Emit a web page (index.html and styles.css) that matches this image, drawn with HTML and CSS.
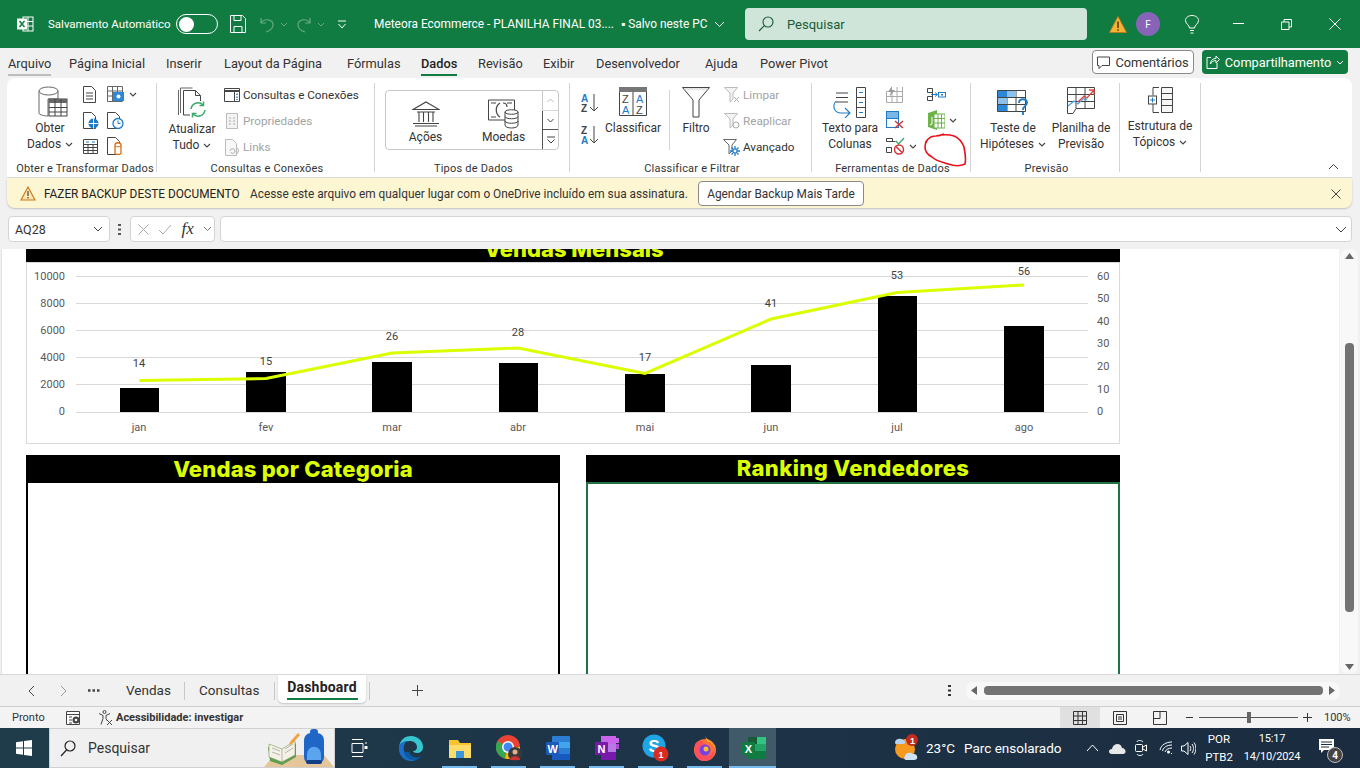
FILE: index.html
```html
<!DOCTYPE html>
<html lang="pt-BR">
<head>
<meta charset="utf-8">
<title>Meteora Ecommerce - PLANILHA FINAL</title>
<link rel="stylesheet" href="styles.css">
</head>
<body>
<svg class="sprite" aria-hidden="true"><symbol id="chev" viewBox="0 0 8 5"><path d="M1 1l3 3 3-3" fill="none" stroke="#444" stroke-width="1.1"/></symbol></svg>
<div class="app">

<header class="titlebar">
  <svg class="t-excel" width="18" height="18" viewBox="0 0 18 18"><rect x="7" y="2" width="10" height="14" fill="none" stroke="#fff"/><path d="M7 6.5h10M7 11h10M12 2v14" stroke="#fff"/><rect x="1" y="3.500" width="10" height="11" fill="#fff"/><path d="M3.500 6l5 6M8.500 6l-5 6" stroke="#107c41" stroke-width="1.500"/></svg>
  <span class="t-auto">Salvamento Automático</span>
  <span class="toggle"><span class="knob"></span></span>
  <svg class="t-save" width="16" height="18" viewBox="0 0 16 18"><path d="M.5.500h12l3 3v14H.5zM4 .5v5h7v-5M4 17.500v-6h8v6" fill="none" stroke="#fff"/></svg>
  <svg class="t-undo" width="15" height="17" viewBox="0 0 15 17"><path d="M1 2v5h5M1 7c3-5 12-4 12 2 0 4-4 6-7 7" fill="none" stroke="#66a884" stroke-width="1.200"/></svg>
  <svg class="t-c1" width="8" height="5"><path d="M1 1l3 3 3-3" fill="none" stroke="#66a884"/></svg>
  <svg class="t-redo" width="15" height="17" viewBox="0 0 15 17"><path d="M14 2v5H9M14 7C11 2 2 3 2 9c0 4 4 6 7 7" fill="none" stroke="#66a884" stroke-width="1.200"/></svg>
  <svg class="t-c2" width="8" height="5"><path d="M1 1l3 3 3-3" fill="none" stroke="#66a884"/></svg>
  <svg class="t-cust" width="10" height="9" viewBox="0 0 10 9"><path d="M1 1h8M1.500 4l3.500 4 3.500-4" fill="none" stroke="#fff"/></svg>
  <span class="t-name">Meteora Ecommerce - PLANILHA FINAL 03....</span>
  <span class="t-saved">▪ Salvo neste PC</span>
  <svg class="t-c3" width="11" height="7"><path d="M1 1l4.500 4.500L10 1" fill="none" stroke="#fff"/></svg>
  <div class="t-search">
    <svg width="16" height="16" viewBox="0 0 16 16"><circle cx="10" cy="6" r="5" fill="none" stroke="#185c37" stroke-width="1.100"/><path d="M6.500 9.500L1 15" stroke="#185c37" stroke-width="1.100"/></svg>
    <span>Pesquisar</span>
  </div>
  <svg class="t-warn" width="18" height="17" viewBox="0 0 18 17"><path d="M9 .5l8.500 16H.5z" fill="#f5b335" stroke="#c8761a" stroke-width=".8"/><path d="M9 5.500v6.500M9 13.200v1.600" stroke="#5a3a10" stroke-width="1.600"/></svg>
  <span class="t-avatar">F</span>
  <svg class="t-bulb" width="14" height="19" viewBox="0 0 14 19"><path d="M4.500 13c0-3-4-4-4-7.500C.5 2.500 3.500.5 7 .5s6.500 2 6.500 5c0 3.500-4 4.500-4 7.500zM5 15.500h4M5.500 18h3" fill="none" stroke="#fff"/></svg>
  <svg class="t-min" width="11" height="2"><path d="M0 .5h11" stroke="#fff"/></svg>
  <svg class="t-rest" width="11" height="11" viewBox="0 0 11 11"><path d="M.5 3h7.500v7.500H.5zM3 3V.5h7.500V8H8" fill="none" stroke="#fff"/></svg>
  <svg class="t-close" width="12" height="12" viewBox="0 0 12 12"><path d="M.5.500l11 11M11.500.500l-11 11" stroke="#fff"/></svg>
</header>

<nav class="tabs">
  <span class="tab tab-file">Arquivo</span>
  <span class="tab">Página Inicial</span>
  <span class="tab">Inserir</span>
  <span class="tab">Layout da Página</span>
  <span class="tab">Fórmulas</span>
  <span class="tab tab-on">Dados</span>
  <span class="tab">Revisão</span>
  <span class="tab">Exibir</span>
  <span class="tab">Desenvolvedor</span>
  <span class="tab">Ajuda</span>
  <span class="tab">Power Pivot</span>
  <span class="tabs-fill"></span>
  <span class="btn-comments">
    <svg width="13" height="13" viewBox="0 0 13 13"><path d="M.5 1h12v8.500H5l-3 3v-3H.5z" fill="none" stroke="#444"/></svg>Comentários</span>
  <span class="btn-share">
    <svg width="14" height="14" viewBox="0 0 14 14"><path d="M5 2.500H1v11h10V8M4.500 9c0-4 3-5.500 5.500-5.500V1l3.500 3.500L10 8V5.500C8 5.500 5.500 6.500 4.500 9z" fill="none" stroke="#fff"/></svg>Compartilhamento
    <svg width="8" height="5"><path d="M1 1l3 3 3-3" fill="none" stroke="#fff"/></svg></span>
</nav>

<section class="ribbon">
  <div class="group g1">
    <div class="gbody">
      <div class="big w60">
        <div class="bigic bi-obter"><svg width="30" height="32" viewBox="0 0 30 32"><path d="M1 5v22c0 2 6 3 9 3V13h10V5" fill="#fff" stroke="#666"/><ellipse cx="10.500" cy="5" rx="9.500" ry="4" fill="#fff" stroke="#666"/><rect x="11" y="13" width="18" height="17" fill="#fff" stroke="#444"/><rect x="11" y="13" width="18" height="4" fill="#666"/><path d="M11 21.500h18M11 26h18M17 13v17M23 13v17" stroke="#444"/></svg></div>
        <span>Obter</span><span>Dados <svg class="chev"><use href="#chev"/></svg></span>
      </div>
      <div class="smallgrid g1grid">
        <svg width="14" height="17" viewBox="0 0 14 17"><path d="M.5.500h8l4 4v12H.5z" fill="#fff" stroke="#444"/><path d="M3 7h7M3 10h7M3 13h7" stroke="#444"/></svg>
        <span class="cell"><svg width="18" height="16" viewBox="0 0 18 16"><path d="M.5.500h15v15H.5zM.5 5h15M.5 10h15M5.500.500v15M10.500.500v15" fill="none" stroke="#666"/><rect x="6" y="6" width="11" height="9" fill="#2b88d8"/><circle cx="11.500" cy="10.500" r="2" fill="#fff"/></svg><svg class="chev"><use href="#chev"/></svg></span>
        <svg width="16" height="17" viewBox="0 0 16 17"><path d="M.5.500h8l4 4v12H.5z" fill="#fff" stroke="#444"/><circle cx="10.500" cy="11.500" r="5" fill="#1e7bc8"/><path d="M5.500 11.500h10M10.500 6.500v10" stroke="#fff"/></svg>
        <svg width="17" height="17" viewBox="0 0 17 17"><path d="M.5.500h8l4 4v12H.5z" fill="#fff" stroke="#444"/><circle cx="11" cy="11.500" r="5" fill="#fff" stroke="#1e7bc8" stroke-width="1.300"/><path d="M11 8.500v3h2.500" fill="none" stroke="#1e7bc8"/></svg>
        <svg width="15" height="15" viewBox="0 0 15 15"><path d="M.5.500h14v14H.5zM.5 5.500h14M.5 8.500h14M.5 11.500h14M5 5.500v9M10 5.500v9" fill="#fff" stroke="#444"/><path d="M3 3h3M9 3h3" stroke="#1e7bc8"/></svg>
        <svg width="16" height="18" viewBox="0 0 16 18"><path d="M.5.500h8l4 4v13H.5z" fill="#fff" stroke="#444"/><path d="M8 8c0-3 6-3 6 0v8c0 2-6 2-6 0z" fill="#fff" stroke="#d86c10" stroke-width="1.300"/><path d="M8 9c1.500 1 4.500 1 6 0" fill="none" stroke="#d86c10"/></svg>
      </div>
    </div>
    <div class="glabel">Obter e Transformar Dados</div>
  </div>

  <div class="group g2">
    <div class="gbody">
      <div class="big w50">
        <div class="bigic"><svg width="29" height="32" viewBox="0 0 29 32"><path d="M2.500 26V1h12M.5 28V3" fill="none" stroke="#666"/><path d="M5.500 28V3.500h12l5 5V14M5.500 28H12" fill="#fff" stroke="#444"/><path d="M17.500 3.500v5h5" fill="none" stroke="#444"/><path d="M13 22a7 7 0 0 1 12-4M27 23a7 7 0 0 1-12 4" fill="none" stroke="#39a96b" stroke-width="1.500"/><path d="M25.500 14.500v4h-4M14.500 30.500v-4h4" fill="none" stroke="#39a96b" stroke-width="1.500"/></svg></div>
        <span>Atualizar</span><span>Tudo <svg class="chev"><use href="#chev"/></svg></span>
      </div>
      <div class="list l-g2">
        <div class="li"><span class="lic"><svg width="16" height="14" viewBox="0 0 16 14"><path d="M.5.500h15v13H.5z" fill="#fff" stroke="#444"/><path d="M.5 3h15" stroke="#444" stroke-width="2"/><path d="M10.500 3v10" stroke="#444"/><path d="M13 5.500v1.500M13 8.500v1.500M13 11v1" stroke="#1e7bc8" stroke-width="1.500"/></svg></span>Consultas e Conexões</div>
        <div class="li off"><span class="lic"><svg width="12" height="16" viewBox="0 0 12 16"><path d="M.5.500h11v15H.5z" fill="#f3f3f3" stroke="#bbb"/><path d="M3 5h2M7 5h2M3 8h2M7 8h2M3 11h2M7 11h2" stroke="#aaa"/></svg></span>Propriedades</div>
        <div class="li off"><span class="lic"><svg width="14" height="17" viewBox="0 0 14 17"><path d="M.5.500h7l4 4v12H.5z" fill="#f8f8f8" stroke="#bbb"/><path d="M5 12c0-3 5-3 5 0s-4 3-4 1M12 9c2 1 2 5-1 6" fill="none" stroke="#aaa"/></svg></span>Links</div>
      </div>
    </div>
    <div class="glabel">Consultas e Conexões</div>
  </div>

  <div class="group g3">
    <div class="gbody">
      <div class="gallery">
        <div class="gitem gi1">
          <svg width="28" height="26" viewBox="0 0 28 26"><path d="M1 8.500L14 1l13 7.500zM3 25h22M1 22.500h26M5 11h18M7 11v10M11.500 11v10M16.500 11v10M21 11v10" fill="none" stroke="#444" stroke-width="1.100"/></svg>
          <span>Ações</span>
        </div>
        <div class="gitem gi2">
          <svg width="31" height="30" viewBox="0 0 31 30"><path d="M.5 1h26v20H.5z" fill="#fff" stroke="#444"/><path d="M3 4h5M3 18h5M19 4h5" stroke="#444"/><path d="M12 4c-5 3-5 11 0 14M15 4c3 0 4 2 4 4" fill="none" stroke="#444" stroke-width="1.200"/><path d="M17 13c0-3 13-3 13 0v13c0 4-13 4-13 0z" fill="#fff" stroke="#444"/><path d="M17 13c0 3 13 3 13 0M17 17.500c0 3 13 3 13 0M17 22c0 3 13 3 13 0" fill="none" stroke="#444"/></svg>
          <span>Moedas</span>
        </div>
        <div class="gscroll">
          <span class="gs gs-off"><svg width="7" height="5"><path d="M.5 4l3-3 3 3" fill="none" stroke="#bbb"/></svg></span>
          <span class="gs"><svg width="7" height="5"><path d="M.5 1l3 3 3-3" fill="none" stroke="#444"/></svg></span>
          <span class="gs"><svg width="8" height="8" viewBox="0 0 8 8"><path d="M0 1h8M.5 3.500l3.500 3.500 3.500-3.500" fill="none" stroke="#444"/></svg></span>
        </div>
      </div>
    </div>
    <div class="glabel">Tipos de Dados</div>
  </div>

  <div class="group g4">
    <div class="gbody">
      <div class="sorts">
        <svg width="20" height="20" viewBox="0 0 20 20"><text x="1" y="9" class="sv-blue">A</text><text x="1" y="19" class="sv-dark">Z</text><path d="M14 1v17M10 14l4 4 4-4" fill="none" stroke="#444"/></svg>
        <svg width="20" height="20" viewBox="0 0 20 20"><text x="1" y="9" class="sv-dark">Z</text><text x="1" y="19" class="sv-blue">A</text><path d="M14 1v17M10 14l4 4 4-4" fill="none" stroke="#444"/></svg>
      </div>
      <div class="big b-class">
        <div class="bigic"><svg width="28" height="29" viewBox="0 0 28 29"><path d="M.5.500h27v28H.5z" fill="#fff" stroke="#444"/><rect x="0" y="0" width="28" height="5" fill="#777"/><path d="M14 5v24" stroke="#444"/><text x="3" y="16" class="sv-dark2">Z</text><text x="3" y="27" class="sv-blue2">A</text><text x="17" y="16" class="sv-blue2">A</text><text x="17" y="27" class="sv-dark2">Z</text></svg></div>
        <span>Classificar</span>
      </div>
      <div class="vsep"></div>
      <div class="big w40 b-filt">
        <div class="bigic"><svg width="28" height="31" viewBox="0 0 28 31"><path d="M.5.500h27L17 13v17h-6V13z" fill="#fff" stroke="#444"/><path d="M2 2h24" stroke="#ccc"/></svg></div>
        <span>Filtro</span>
      </div>
      <div class="list l-g4">
        <div class="li off"><span class="lic"><svg width="16" height="16" viewBox="0 0 16 16"><path d="M.5.500h13L9 6v6L6 15V6z" fill="#f3f3f3" stroke="#bbb"/><path d="M10 10l5 5M15 10l-5 5" stroke="#aaa"/></svg></span>Limpar</div>
        <div class="li off"><span class="lic"><svg width="16" height="16" viewBox="0 0 16 16"><path d="M.5.500h13L9 6v6L6 15V6z" fill="#f3f3f3" stroke="#bbb"/><circle cx="12" cy="12" r="3" fill="none" stroke="#aaa"/></svg></span>Reaplicar</div>
        <div class="li"><span class="lic"><svg width="17" height="17" viewBox="0 0 17 17"><path d="M.5.500h13L9 6v6L6 15V6z" fill="#fff" stroke="#666"/><path d="M12 7v10M7 12h10M8.500 8.500l7 7M15.500 8.500l-7 7" stroke="#1e7bc8" stroke-width="1.300"/><circle cx="12" cy="12" r="2" fill="#fff" stroke="#1e7bc8"/></svg></span>Avançado</div>
      </div>
    </div>
    <div class="glabel">Classificar e Filtrar</div>
  </div>

  <div class="group g5">
    <div class="gbody">
      <div class="big w66">
        <div class="bigic"><svg width="34" height="31" viewBox="0 0 34 31"><path d="M3 6h12M3 10.500h12M3 15h12" stroke="#444"/><path d="M23.500.500h9v30h-9zM23.500 10.500h9M23.500 20.500h9" fill="#fff" stroke="#444"/><path d="M26 5.500h4M26 15.500h4M26 25.500h4" stroke="#1e7bc8"/><path d="M3 14c-4 5-2 12 5 12h8M12 21l5 5-5 5" fill="none" stroke="#1e7bc8" stroke-width="1.100"/></svg></div>
        <span>Texto para</span><span>Colunas</span>
      </div>
      <div class="smallgrid g5grid">
        <svg width="17" height="17" viewBox="0 0 17 17"><path d="M.5 5.500h16v11H.5zM.5 10.500h16M6 5.500v11M11 1v15.500M16.500 1v5" fill="none" stroke="#aaa"/><path d="M6 0L2 6h3L3 11l6-7H6z" fill="#999"/></svg>
        <svg width="19" height="13" viewBox="0 0 19 13"><path d="M.5.500h5v4h-5zM.5 8.500h5v4h-5zM5.500 2.500v8" fill="none" stroke="#444"/><path d="M4 6.500h6M8 4.500l2.500 2-2.500 2" fill="none" stroke="#1e7bc8"/><rect x="11.500" y="4.500" width="7" height="4.500" fill="#fff" stroke="#1e7bc8"/><rect x="14" y="6" width="2" height="1.500" fill="#1e7bc8"/></svg>
        <svg width="19" height="18" viewBox="0 0 19 18"><rect x=".5" y=".5" width="12" height="16" fill="#fff" stroke="#1e7bc8"/><rect x="1" y="1" width="11" height="6" fill="#7ab7e6"/><path d="M1 7.500h11" stroke="#1e7bc8"/><path d="M9 10l8 7M17 10l-8 7" stroke="#d13438" stroke-width="1.500"/></svg>
        <span class="cell"><svg width="18" height="20" viewBox="0 0 18 20"><path d="M1 3l9-3v20l-9-3z" fill="#6db34a"/><rect x="7" y="4" width="11" height="14" fill="#fff" stroke="#6db34a"/><path d="M7 8.500h11M7 13h11M11 4v14M14.500 4v14" stroke="#6db34a"/><path d="M5 7v7l-2 1" fill="none" stroke="#fff"/></svg><svg class="chev"><use href="#chev"/></svg></span>
        <span class="cell"><svg width="19" height="18" viewBox="0 0 19 18"><path d="M.5 4.500h9M.5 10.500h5M.5 4.500v-3h6v3M.5 10.500h5v5h-5z" fill="none" stroke="#444"/><path d="M10 4l2.500 3L18 1" fill="none" stroke="#39a96b" stroke-width="1.300"/><circle cx="13" cy="12.500" r="4.500" fill="#fff" stroke="#d13438" stroke-width="1.500"/><path d="M10 9.500l6 6" stroke="#d13438" stroke-width="1.500"/></svg><svg class="chev"><use href="#chev"/></svg></span>
        <span></span>
      </div>
    </div>
    <div class="glabel">Ferramentas de Dados</div>
    <svg class="redmark" width="44" height="35" viewBox="0 0 44 35"><path d="M12 3c6-1.500 12-2 18 0 5 2 8 6 10 11 1 5 2 13 1 17-4 2-11 2-17 0-6-2-12-3-16-7C4 22 1 19 1 14c0-4 2-8 6-10 2-1 3-1 5-1zm2 0l6-2" fill="none" stroke="#e8101a" stroke-width="1.600"/></svg>
  </div>

  <div class="group g6">
    <div class="gbody">
      <div class="big w66">
        <div class="bigic"><svg width="32" height="29" viewBox="0 0 32 29"><path d="M.5 3.500h28v21H.5zM.5 10.500h28M.5 17.500h28M10 3.500v21M19 3.500v21" fill="#fff" stroke="#444"/><rect x="1" y="4" width="9" height="6" fill="#2b88d8"/><rect x="1" y="11" width="9" height="6" fill="#8cc1ec"/><rect x="1" y="18" width="9" height="6" fill="#2b88d8"/><rect x="10" y="4" width="9" height="6" fill="#8cc1ec"/><path d="M22 16c0-5 8-5 8 0 0 3-4 3-4 7M26 25v3" fill="none" stroke="#1e7bc8" stroke-width="1.800"/></svg></div>
        <span>Teste de</span><span>Hipóteses <svg class="chev"><use href="#chev"/></svg></span>
      </div>
      <div class="big w66">
        <div class="bigic"><svg width="29" height="27" viewBox="0 0 29 27"><path d="M.5.500h27v21H9l-3 5H.5zM.5 7.500h27M.5 14.500h27M9 .5v21M18 .5v21" fill="#fff" stroke="#444"/><path d="M1 19l6-5 4 3 6-6 3 2" fill="none" stroke="#4aa3e0" stroke-width="1.300"/><path d="M11 15l6-6 3 2 7-8M22 3h5v5" fill="none" stroke="#e0443a" stroke-width="1.300"/></svg></div>
        <span>Planilha de</span><span>Previsão</span>
      </div>
    </div>
    <div class="glabel">Previsão</div>
  </div>

  <div class="group g7">
    <div class="gbody">
      <div class="big w80 b-topic">
        <div class="bigic"><svg width="25" height="26" viewBox="0 0 25 26"><path d="M11 .5H5v8M5 17v8.500h6" fill="none" stroke="#444"/><path d="M13.500.500h11v25h-11zM13.500 6.500h11M13.500 12.500h11M13.500 18.500h11" fill="#f6f6f6" stroke="#444"/><rect x=".5" y="9" width="8" height="8" fill="#fff" stroke="#444"/><path d="M2 13h5M4.500 10.500v5" stroke="#1e7bc8"/></svg></div>
        <span>Estrutura de</span><span>Tópicos <svg class="chev"><use href="#chev"/></svg></span>
      </div>
    </div>
  </div>
  <div class="rib-fill">
    <svg width="11" height="7"><path d="M1 6l4.500-4.500L10 6" fill="none" stroke="#444"/></svg>
  </div>
</section>

<div class="msgbar">
  <svg width="16" height="15" viewBox="0 0 16 15"><path d="M8 1l7 13H1z" fill="#fde6b0" stroke="#c8761a" stroke-width="1.100"/><path d="M8 5v5M8 11v1.500" stroke="#444" stroke-width="1.200"/></svg>
  <strong class="m-title">FAZER BACKUP DESTE DOCUMENTO</strong>
  <span class="m-text">Acesse este arquivo em qualquer lugar com o OneDrive incluído em sua assinatura.</span>
  <span class="m-btn">Agendar Backup Mais Tarde</span>
  <span class="tabs-fill"></span>
  <svg class="m-x" width="10" height="10" viewBox="0 0 10 10"><path d="M.5.500l9 9M9.500.500l-9 9" stroke="#444"/></svg>
</div>

<div class="formula">
  <div class="namebox"><span>AQ28</span><svg width="10" height="6"><path d="M1 1l4 4 4-4" fill="none" stroke="#444"/></svg></div>
  <svg class="dots" width="3" height="11"><path d="M0 1h3M0 5.500h3M0 10h3" stroke="#555" stroke-width="2"/></svg>
  <div class="fxbox">
    <svg width="11" height="11" viewBox="0 0 11 11"><path d="M.5.500l10 10M10.500.500l-10 10" stroke="#aaa"/></svg>
    <svg width="14" height="11" viewBox="0 0 14 11"><path d="M1 6l4 4 8-9" fill="none" stroke="#aaa"/></svg>
    <span class="fx">fx</span>
    <svg width="9" height="6"><path d="M1 1l3.500 3.500L8 1" fill="none" stroke="#777"/></svg>
  </div>
  <div class="finput"><svg width="12" height="7"><path d="M1 1l5 5 5-5" fill="none" stroke="#444"/></svg></div>
</div>

<div class="sheetrow">
  <main class="sheet">
    <div class="hdr-clip"><span>Vendas Mensais</span></div>
    <svg class="chart" width="1094" height="182" viewBox="26 262 1094 182">
      <rect x="26.500" y="262.500" width="1093" height="181" fill="#fff" stroke="#d9d9d9"/>
      <g stroke="#d9d9d9"><path d="M76 276.500h1012M76 303.500h1012M76 330.500h1012M76 357.500h1012M76 384.500h1012M76 412.500h1012"/></g>
      <g class="ch-ax ch-end">
        <text x="65" y="280">10000</text><text x="65" y="307">8000</text><text x="65" y="334">6000</text><text x="65" y="361">4000</text><text x="65" y="388">2000</text><text x="65" y="415">0</text>
      </g>
      <g class="ch-ax">
        <text x="1097" y="280">60</text><text x="1097" y="302">50</text><text x="1097" y="325">40</text><text x="1097" y="347">30</text><text x="1097" y="370">20</text><text x="1097" y="393">10</text><text x="1097" y="415">0</text>
      </g>
      <g fill="#000">
        <rect x="120" y="388" width="39" height="24"/><rect x="246" y="372" width="40" height="40"/><rect x="372" y="362" width="40" height="50"/><rect x="499" y="363" width="39" height="49"/><rect x="625" y="374" width="40" height="38"/><rect x="751" y="365" width="40" height="47"/><rect x="878" y="296" width="39" height="116"/><rect x="1004" y="326" width="40" height="86"/>
      </g>
      <polyline points="139.500,380.500 266,378.500 392,353 518,348 645,373.500 771,319 897,292.500 1024,285" fill="none" stroke="#dcff00" stroke-width="3"/>
      <g class="ch-ax ch-mid">
        <text x="139" y="431">jan</text><text x="266" y="431">fev</text><text x="392" y="431">mar</text><text x="518" y="431">abr</text><text x="645" y="431">mai</text><text x="771" y="431">jun</text><text x="897" y="431">jul</text><text x="1024" y="431">ago</text>
      </g>
      <g class="ch-lab ch-mid">
        <text x="139" y="367">14</text><text x="266" y="365">15</text><text x="392" y="340">26</text><text x="518" y="336">28</text><text x="645" y="361">17</text><text x="771" y="307">41</text><text x="897" y="279">53</text><text x="1024" y="275">56</text>
      </g>
    </svg>
    <div class="panels">
      <section class="panel">
        <h2 class="p-title">Vendas por Categoria</h2>
        <div class="p-body"></div>
      </section>
      <section class="panel">
        <h2 class="p-title p-t2">Ranking Vendedores</h2>
        <div class="p-body p-sel"></div>
      </section>
    </div>
  </main>
  <aside class="vscroll">
    <svg width="9" height="6"><path d="M4.500 0L9 6H0z" fill="#666"/></svg>
    <span class="vthumb"></span>
    <svg width="9" height="6"><path d="M4.500 6L9 0H0z" fill="#666"/></svg>
  </aside>
</div>

<div class="sheettabs">
  <svg class="s-prev" width="7" height="12"><path d="M6 1L1 6l5 5" fill="none" stroke="#444"/></svg>
  <svg class="s-next" width="7" height="12"><path d="M1 1l5 5-5 5" fill="none" stroke="#999"/></svg>
  <svg class="s-more" width="12" height="3"><path d="M0 1.500h2.500M4.500 1.500h2.500M9 1.500h2.500" stroke="#444" stroke-width="2.500"/></svg>
  <span class="s-tab s-v">Vendas</span>
  <span class="s-sep"></span>
  <span class="s-tab s-c">Consultas</span>
  <span class="s-sep"></span>
  <span class="s-active"><span>Dashboard</span></span>
  <span class="s-sep s-sep3"></span>
  <svg class="s-plus" width="11" height="11"><path d="M5.500 0v11M0 5.500h11" stroke="#444"/></svg>
  <span class="tabs-fill"></span>
  <svg class="s-dots" width="3" height="11"><path d="M0 1h3M0 5.500h3M0 10h3" stroke="#333" stroke-width="2"/></svg>
  <div class="hscroll">
    <svg width="6" height="9"><path d="M0 4.500L6 0v9z" fill="#666"/></svg>
    <span class="hthumb"></span>
    <svg width="6" height="9"><path d="M6 4.500L0 0v9z" fill="#666"/></svg>
  </div>
</div>

<footer class="status">
  <span class="st-ready">Pronto</span>
  <svg class="st-macro" width="15" height="14" viewBox="0 0 15 14"><path d="M.5.500h13v13H.5zM.5 3.500h13M3 6h3M3 9h3M3 12h3" fill="#fff" stroke="#444"/><circle cx="10" cy="9" r="3.500" fill="#444"/><circle cx="10" cy="9" r="1.300" fill="#fff"/></svg>
  <svg class="st-acc" width="15" height="15" viewBox="0 0 15 15"><circle cx="6.500" cy="2" r="1.500" fill="none" stroke="#444"/><path d="M1 3.500l4 2v3l-2 6M12 3.500l-4 2v3l1 2M9 10l5 5M14 10l-5 5" fill="none" stroke="#444"/></svg>
  <strong class="st-text">Acessibilidade: investigar</strong>
  <span class="tabs-fill"></span>
  <span class="st-view st-view-on"><svg width="14" height="14" viewBox="0 0 14 14"><path d="M.5.500h13v13H.5zM.5 5h13M.5 9.500h13M5 .5v13M9.500.500v13" fill="none" stroke="#333"/></svg></span>
  <span class="st-view"><svg width="14" height="14" viewBox="0 0 14 14"><path d="M.5.500h13v13H.5z" fill="none" stroke="#333"/><path d="M3.500 3.500h7v7h-7zM5 6h4M5 8h4" fill="none" stroke="#333"/></svg></span>
  <span class="st-view"><svg width="14" height="14" viewBox="0 0 14 14"><path d="M.5.500h13v13H.5zM7 .5v7H.5" fill="none" stroke="#333"/></svg></span>
  <div class="zoomctl">
    <svg width="7" height="7"><path d="M0 3.500h7" stroke="#333"/></svg>
    <span class="z-track"><span class="z-thumb"></span></span>
    <svg width="9" height="9"><path d="M0 4.500h9M4.500 0v9" stroke="#333"/></svg>
    <span class="z-val">100%</span>
  </div>
</footer>

<div class="taskbar">
  <svg class="tb-win" width="16" height="16" viewBox="0 0 16 16"><path d="M0 2.200l7-1v6.300H0zM8 1l8-1v7.500H8zM0 8.500h7v6.300l-7-1zM8 8.500h8V16l-8-1.100z" fill="#fff"/></svg>
  <div class="tb-search">
    <svg width="16" height="17" viewBox="0 0 16 17"><circle cx="10" cy="6" r="5" fill="none" stroke="#222" stroke-width="1.200"/><path d="M6.500 10L1 16" stroke="#222" stroke-width="1.200"/></svg>
    <span>Pesquisar</span>
    <svg class="tb-art" width="78" height="40" viewBox="0 0 78 40"><path d="M8 40l10-12h50l10 12z" fill="#e5c69b"/><path d="M12 20l14 4 14-8v14l-14 8-12-4z" fill="#5f9e4f"/><path d="M13 17l13 5 13-8v14l-13 7-13-5z" fill="#f4f2e6" stroke="#7a9a5a" stroke-width=".6"/><path d="M26 22v13M16 21l8 3M16 25l8 3M29 22l8-5M29 26l8-5" stroke="#999" stroke-width=".7"/><path d="M34 15l8-9 2 2-8 9-3 1z" fill="#f2a23c"/><rect x="48" y="6" width="20" height="31" rx="7" fill="#1f66c6"/><rect x="54" y="2" width="8" height="6" rx="3" fill="#1f66c6"/><path d="M51 28c0-11 14-11 14 0v6H51z" fill="#5aa5ee"/><rect x="50" y="33" width="16" height="4" rx="2" fill="#123e86"/></svg>
  </div>
  <div class="tb-apps">
    <span class="tb-item tb-plain tb-tv"><svg width="17" height="18" viewBox="0 0 17 18"><path d="M1 .5h11M1 17.500h11M1 4.500h11v9H1zM15 3v2M15 8v2" fill="none" stroke="#fff"/><rect x="13.500" y="7" width="3" height="3" fill="#fff"/></svg></span>
    <span class="tb-item tb-plain"><svg width="25" height="26" viewBox="0 0 25 26"><path d="M1 12C2 4 8 1 13 1c7 0 12 5 12 11 0 4-3 6-6 6-2 0-4-1-4-2 3 0 4-2 4-4 0-4-4-6-7-6-6 0-11 3-11 6z" fill="#37c6d0"/><path d="M1 12c0-3 4-6 9-6-3 1-5 5-4 10 1 5 6 9 12 9-2 1-4 1-5 1C6 26 0 20 1 12z" fill="#1b6fc8"/><path d="M6 16c0 6 6 10 12 9 2-.5 4-2 5-4-5 3-10 1-12-4-2 0-4 0-5-1z" fill="#0c59a4"/></svg></span>
    <span class="tb-item"><svg width="22" height="20" viewBox="0 0 22 20"><path d="M0 2h9l2 3h11v15H0z" fill="#f7c430"/><path d="M0 7h22v13H0z" fill="#fcdc6a"/><rect x="7" y="13" width="8" height="7" fill="#3a96dd"/></svg></span>
    <span class="tb-item"><svg width="26" height="26" viewBox="0 0 26 26"><circle cx="12" cy="12" r="12" fill="#ea4335"/><path d="M12 12L1.500 6A12 12 0 0 0 9 23.600z" fill="#34a853"/><path d="M12 12h12a12 12 0 0 1-15 11.600z" fill="#fbbc05"/><circle cx="12" cy="12" r="6" fill="#fff"/><circle cx="12" cy="12" r="4.500" fill="#4285f4"/><circle cx="19" cy="19" r="7" fill="#3a3a3a"/><circle cx="19" cy="17" r="2.500" fill="#e0b090"/><path d="M14 25c0-5 10-5 10 0z" fill="#c33"/></svg></span>
    <span class="tb-item"><svg width="24" height="24" viewBox="0 0 24 24"><rect x="6" y="0" width="18" height="24" rx="1" fill="#2b7cd3"/><rect x="6" y="6" width="18" height="6" fill="#41a5ee"/><rect x="6" y="18" width="18" height="6" fill="#185abd"/><rect x="0" y="6" width="13" height="13" rx="1" fill="#185abd"/><text x="1.500" y="16.500" class="sv-app">W</text></svg></span>
    <span class="tb-item"><svg width="24" height="24" viewBox="0 0 24 24"><rect x="6" y="0" width="15" height="24" rx="1" fill="#ba77e6"/><rect x="6" y="0" width="15" height="8" fill="#ca64ea"/><rect x="6" y="16" width="15" height="8" fill="#7719aa"/><rect x="21" y="2" width="3" height="5" fill="#ca64ea"/><rect x="21" y="8" width="3" height="5" fill="#ae4bd5"/><rect x="0" y="6" width="13" height="13" rx="1" fill="#7719aa"/><text x="2.500" y="16.500" class="sv-app">N</text></svg></span>
    <span class="tb-item"><svg width="27" height="28" viewBox="0 0 27 28"><circle cx="12" cy="12" r="11.500" fill="#1fa5e6"/><text x="6.500" y="18" class="sv-app2">S</text><circle cx="19" cy="20" r="7.500" fill="#d92c20"/><text x="16.500" y="24" class="sv-badge">1</text></svg></span>
    <span class="tb-item"><svg width="24" height="25" viewBox="0 0 24 25"><circle cx="12" cy="14" r="11" fill="#ff7139"/><path d="M12 0c2 4 8 6 10 12 1-5-3-2-5-6-2 1-4-3-5-6z" fill="#ffbd2e"/><path d="M2 8c2-3 5-4 7-3-2 2 4 2 5 5-4 1-7 2-6 6 1 3 5 4 8 3 3-1 4-3 5-6 2 8-5 12-10 12C5 25 0 20 2 8z" fill="#ff4f5e"/><circle cx="12" cy="14" r="5.500" fill="#7542e5"/><circle cx="13" cy="13" r="2.500" fill="#ffbd2e"/></svg></span>
    <span class="tb-item tb-active"><svg width="24" height="24" viewBox="0 0 24 24"><rect x="6" y="1" width="18" height="22" rx="1" fill="#21a366"/><rect x="6" y="1" width="9" height="7" fill="#185c37"/><rect x="15" y="1" width="9" height="7" fill="#33c481"/><rect x="6" y="15" width="18" height="8" fill="#107c41"/><rect x="0" y="6" width="13" height="13" rx="1" fill="#107c41"/><text x="2.800" y="16.500" class="sv-app">X</text></svg></span>
  </div>
  <span class="tabs-fill"></span>
  <svg class="tb-weather" width="27" height="28" viewBox="0 0 27 28"><circle cx="11" cy="15" r="10" fill="#f59a1f"/><path d="M1 8c1-4 6-4 8-2 3 0 3 4 0 4H2c-1 0-1-1-1-2z" fill="#b9d3ee"/><path d="M11 22c1-4 6-4 8-2 5-1 6 6 1 6h-8c-2 0-2-3-1-4z" fill="#cfe3f6"/><circle cx="18" cy="6" r="6" fill="#c42b1c"/><text x="16" y="9.500" class="sv-badge">1</text></svg>
  <span class="tb-temp">23°C</span>
  <span class="tb-wtxt">Parc ensolarado</span>
  <svg class="tb-up" width="13" height="8"><path d="M1 7l5.500-6L12 7" fill="none" stroke="#fff"/></svg>
  <svg class="tb-cloud" width="17" height="11" viewBox="0 0 17 11"><path d="M3 11c-4 0-4-5 0-5 1-6 9-7 10-1 4 0 5 6 1 6z" fill="#e8e8e8"/></svg>
  <svg class="tb-meet" width="12" height="18" viewBox="0 0 12 18"><path d="M2 3C2 1 7 1 8 3M2 15c1 2 5 2 6 0" fill="none" stroke="#fff"/><rect x=".5" y="5.500" width="7" height="7" rx="1" fill="none" stroke="#fff"/><path d="M8 8l3.500-2v6L8 10" fill="none" stroke="#fff"/></svg>
  <svg class="tb-wifi" width="14" height="14" viewBox="0 0 14 14"><path d="M1 9c1-5 6-8 12-8M3.500 10c.5-3 4-6 9.500-6M6 11c.5-2 3-4 7-4" fill="none" stroke="#fff"/><circle cx="9.500" cy="11" r="1.500" fill="#fff"/><path d="M12 12h1v1h-1z" fill="#fff"/></svg>
  <svg class="tb-vol" width="15" height="15" viewBox="0 0 15 15"><path d="M.5 5h2.500L7 1.500v12L3 10H.5z" fill="none" stroke="#fff"/><path d="M9 5c1 1.500 1 3.500 0 5M11 3c2 3 2 6 0 9M13 1.500c2.500 3.500 2.500 8.500 0 12" fill="none" stroke="#fff"/></svg>
  <div class="tb-2l tb-lang"><span>POR</span><span>PTB2</span></div>
  <div class="tb-2l tb-clock"><span>15:17</span><span>14/10/2024</span></div>
  <div class="tb-note">
    <svg width="15" height="14" viewBox="0 0 15 14"><path d="M0 0h15v11H5l-3 3v-3H0z" fill="#fff"/><path d="M2 3h11M2 5.500h11M2 8h8" stroke="#1b2c3f"/></svg>
    <span class="tb-badge">4</span>
  </div>
</div>
</div>
</body>
</html>
```
FILE: styles.css
```css
* { box-sizing: border-box; }
html, body { margin: 0; padding: 0; }
body { font-family: Roboto, "Noto Sans", "Liberation Sans", sans-serif; font-size: 12px; color: #333; background: #f1f1f1; }
.sprite { display: none; }
.app { width: 1360px; height: 768px; display: flex; flex-direction: column; overflow: hidden; }
.tabs-fill { flex: 1; }
svg { display: block; flex: none; }

.titlebar { height: 48px; background: #107c41; color: #fff; display: flex; align-items: center; flex: none; font-size: 12px; }
.t-excel { margin-left: 16px; }
.t-auto { margin-left: 14px; width: 122px; font-size: 11.500px; white-space: nowrap; }
.toggle { margin-left: 6px; width: 42px; height: 20px; border: 1px solid #fff; border-radius: 10px; background: #107c41; display: flex; align-items: center; padding-left: 2px; }
.knob { width: 15px; height: 15px; border-radius: 50%; background: #fff; }
.t-save { margin-left: 12px; }
.t-undo { margin-left: 14px; }
.t-c1 { margin-left: 5px; }
.t-redo { margin-left: 8px; }
.t-c2 { margin-left: 6px; }
.t-cust { margin-left: 12px; }
.t-name { margin-left: 27px; width: 247px; white-space: nowrap; font-size: 11.900px; }
.t-saved { width: 93px; white-space: nowrap; font-size: 11.900px; }
.t-c3 { margin-left: 0; }
.t-search { margin-left: 20px; width: 342px; height: 32px; background: #cfe5d9; border-radius: 4px; display: flex; align-items: center; color: #185c37; font-size: 13px; padding-left: 13px; gap: 13px; }
.t-warn { margin-left: 22px; }
.t-avatar { margin-left: 9px; width: 24px; height: 24px; border-radius: 50%; background: #8764b8; color: #fff; font-size: 10px; display: flex; align-items: center; justify-content: center; }
.t-bulb { margin-left: 25px; }
.t-min { margin-left: 34px; }
.t-rest { margin-left: 37px; }
.t-close { margin-left: 37px; }

.tabs { height: 30px; display: grid; grid-template-columns: 61px 97px 58px 123px 74px 57px 65px 53px 109px 55px 100px 1fr auto auto; column-gap: 0; align-items: center; padding-left: 8px; padding-right: 12px; flex: none; font-size: 12.800px; color: #333; }
.tab { height: 24px; line-height: 24px; white-space: nowrap; margin-top: 2px; justify-self: start; }
.tab-file { border-bottom: 2px solid #bdbdbd; }
.tab-on { font-weight: 500; color: #222; border-bottom: 2px solid #107c41; }
.btn-comments { height: 24px; width: 102px; background: #fff; border: 1px solid #8a8a8a; border-radius: 4px; display: flex; align-items: center; justify-content: center; gap: 5px; margin-top: -2px; }
.btn-share { height: 24px; width: 146px; background: #107c41; color: #fff; border-radius: 4px; display: flex; align-items: center; justify-content: center; gap: 5px; margin-left: 8px; margin-top: -2px; }

.ribbon { height: 100px; margin: 0 8px 0 7px; background: #fff; border-radius: 8px 8px 0 0; display: flex; flex: none; border-bottom: 1px solid #d9d9d9; position: relative; }
.group { margin-top: 5px; height: 89px; border-right: 1px solid #d4d4d4; display: flex; flex-direction: column; position: relative; }
.gbody { height: 77px; display: flex; }
.glabel { height: 12px; line-height: 18px; text-align: center; font-size: 11px; letter-spacing: .2px; white-space: nowrap; color: #333; padding-left: 3px; }
.g1 .glabel { padding-left: 7px; }
.g1 { width: 150px; } .g2 { width: 218px; } .g3 { width: 195px; } .g4 { width: 242px; } .g5 { width: 159px; } .g6 { width: 149px; } .g7 { width: 81px; }
.rib-fill { flex: 1; display: flex; align-items: flex-end; justify-content: flex-end; padding: 0 13px 7px 0; }
.big { display: flex; flex-direction: column; align-items: center; line-height: 16px; white-space: nowrap; flex: none; }
.big > span { display: flex; align-items: center; gap: 4px; height: 16px; }
.bigic { height: 37px; padding-top: 4px; flex: none; }
.chev { width: 8px; height: 5px; flex: none; }
.w60 { width: 60px; margin-left: 13px; }
.w50 { width: 50px; margin-left: 10px; }
.w40 { width: 40px; }
.w66 { width: 66px; margin-left: 7px; }
.w80 { width: 80px; }
.bi-obter { padding-top: 3px; margin-left: 5px; }
.smallgrid { display: grid; margin-top: -2px; grid-auto-rows: 26px; align-items: center; justify-items: start; }
.g1grid { grid-template-columns: 24px 30px; margin-left: 3px; }
.g5grid { grid-template-columns: 41px 30px; margin-left: 3px; }
.cell { display: flex; align-items: center; gap: 4px; }
.list { display: flex; flex-direction: column; margin-top: -1px; }
.li { height: 26px; display: flex; align-items: center; white-space: nowrap; font-size: 11.700px; }
.lic { display: flex; justify-content: center; flex: none; }
.off { color: #a3a3a3; }
.l-g2 { margin-left: 3px; }
.l-g2 .lic { width: 23px; }
.l-g4 { margin-left: 4px; }
.l-g4 .lic { width: 23px; }
.g2 .big > span { position: relative; top: 1px; }
.gallery { margin: 7px 0 0 10px; width: 174px; height: 60px; border: 1px solid #c8c8c8; border-radius: 4px; display: flex; position: relative; }
.gitem { display: flex; flex-direction: column; align-items: center; font-size: 12px; height: 58px; }
.gitem svg { height: 32px; }
.gitem span { margin-top: -1px; line-height: 16px; }
.gi1 { width: 80px; padding-top: 7px; }
.gi2 { width: 78px; padding-top: 7px; }
.gscroll { margin-left: auto; width: 16px; display: flex; flex-direction: column; border-left: 1px solid #c8c8c8; }
.gs { flex: 1; display: flex; align-items: center; justify-content: center; border-bottom: 1px solid #555; border-left: 1px solid #555; margin-left: -1px; }
.gs:last-child { border-bottom: 0; }
.gs-off { border-color: #d8d8d8; border-left: 0; }
.sorts { display: flex; flex-direction: column; gap: 12px; margin: 10px 0 0 10px; }
.sv-blue, .sv-dark { font: 700 10px "Liberation Sans", sans-serif; }
.sv-blue { fill: #1e7bc8; } .sv-dark { fill: #444; }
.sv-blue2, .sv-dark2 { font: 11px "Liberation Sans", sans-serif; }
.sv-blue2 { fill: #1e7bc8; } .sv-dark2 { fill: #444; }
.b-class { width: 66px; }
.vsep { width: 1px; height: 60px; background: #d4d4d4; margin: 7px 0 0 3px; }
.b-filt { margin-left: 6px; }
.g5 .w66 { margin-left: 5px; }
.g6 .w66 { margin-left: 9px; margin-right: 1px; }
.g6 .w66 + .w66 { margin-left: 1px; }
.g7 .w80 { margin-left: 0; }
.b-topic span:first-of-type { margin-top: -2px; }
.redmark { position: absolute; left: 112px; top: 50px; }

.msgbar { height: 30px; margin: 0 8px 0 7px; background: #fdf6d3; border-radius: 0 0 8px 8px; box-shadow: 0 1px 2px rgba(0,0,0,.2); display: flex; align-items: center; padding: 1px 11px 0 13px; flex: none; font-size: 11.850px; }
.m-title { font-weight: 400; margin-left: 8px; width: 206px; white-space: nowrap; color: #222; }
.m-text { width: 448px; white-space: nowrap; }
.m-btn { width: 166px; height: 25px; background: #fff; border: 1px solid #8a8a8a; border-radius: 4px; display: flex; align-items: center; justify-content: center; white-space: nowrap; }

.formula { height: 26px; margin: 8px 8px 0 8px; display: flex; align-items: center; flex: none; }
.namebox { width: 102px; height: 26px; background: #fff; border: 1px solid #d4d4d4; border-radius: 4px; display: flex; align-items: center; justify-content: space-between; padding: 0 6px; font-size: 12.500px; }
.dots { margin: 0 9px 0 8px; }
.fxbox { width: 85px; height: 26px; background: #fff; border: 1px solid #d4d4d4; border-radius: 4px; display: flex; align-items: center; padding: 0 2px 0 7px; justify-content: space-between; }
.fx { font: italic 400 17px "Liberation Serif", serif; color: #333; }
.finput { flex: 1; height: 26px; margin-left: 5px; background: #fff; border: 1px solid #d4d4d4; border-radius: 4px; display: flex; align-items: center; justify-content: flex-end; padding-right: 4px; }

.sheetrow { height: 425px; margin-top: 7px; display: flex; flex: none; }
.sheet { width: 1338px; margin-left: 1px; background: #fff; padding-left: 24px; overflow: hidden; border-left: 1px solid #e2e2e2; }
.hdr-clip { width: 1094px; height: 13px; background: #000; text-align: center; overflow: hidden; }
.hdr-clip span { display: block; margin-top: -13px; font: 800 22px/26px Inter, sans-serif; color: #dcff00; padding-left: 2px; }
.ch-ax text { font: 11px Roboto, sans-serif; fill: #595959; }
.ch-lab text { font: 11px Roboto, sans-serif; fill: #404040; }
.ch-end text { text-anchor: end; }
.ch-mid text { text-anchor: middle; }
.panels { display: grid; grid-template-columns: 534px 534px; gap: 26px; margin-top: 11px; }
.p-title { height: 28px; margin: 0; background: #000; color: #dcff00; font: 800 22px/28px Inter, sans-serif; letter-spacing: .2px; text-align: center; }
.p-t2 { height: 27px; letter-spacing: .4px; line-height: 27px; }
.p-body { height: 195px; background: #fff; border-left: 2px solid #000; border-right: 2px solid #000; }
.p-sel { height: 196px; border-left-color: #217346; border-right-color: #217346; border-top: 2px solid #217346; }
.vscroll { margin: 0 2px 0 1px; width: 18px; background: #f8f8f8; border-radius: 8px; display: flex; flex-direction: column; align-items: center; padding: 4px 0; }
.vthumb { width: 9px; height: 269px; background: #737373; border-radius: 4px; margin-top: 84px; margin-bottom: auto; }

.sheettabs { height: 32px; display: flex; align-items: center; flex: none; border-top: 1px solid #d8d8d8; font-size: 13.500px; }
.s-prev { margin-left: 28px; }
.s-next { margin-left: 25px; }
.s-more { margin-left: 21px; }
.s-tab { white-space: nowrap; margin-bottom: 2px; }
.s-v { margin-left: 26px; width: 58px; }
.s-c { margin-left: 14px; width: 75px; }
.s-sep { width: 1px; height: 18px; background: #c8c8c8; }
.s-active { margin-left: 3px; width: 88px; height: 28px; margin-top: -4px; background: #fff; border-radius: 0 0 5px 5px; box-shadow: 0 1px 2px rgba(0,0,0,.2); display: flex; justify-content: center; padding-top: 5px; font-weight: 700; color: #222; }
.s-active span { width: 71px; height: 20px; text-align: center; border-bottom: 2px solid #107c41; white-space: nowrap; font-size: 14px; letter-spacing: .2px; line-height: 15px; }
.s-sep3 { margin-left: 3px; }
.s-plus { margin-left: 42px; }
.s-dots { margin-right: 15px; }
.hscroll { width: 374px; height: 18px; background: #f8f8f8; border-radius: 8px; margin-right: 20px; display: flex; align-items: center; justify-content: space-between; padding: 0 5px; }
.hthumb { width: 339px; height: 9px; border-radius: 4px; background: #737373; }

.status { height: 22px; background: #f3f3f3; border-top: 1px solid #cfcfcf; display: flex; align-items: center; flex: none; font-size: 11px; }
.st-ready { margin-left: 12px; width: 54px; }
.st-acc { margin-left: 17px; }
.st-text { margin-left: 3px; font-weight: 700; color: #333; }
.st-view { width: 40px; height: 21px; display: flex; align-items: center; justify-content: center; }
.st-view-on { background: #e0e0e0; }
.zoomctl { display: flex; align-items: center; margin-left: 6px; padding-right: 8px; }
.z-track { width: 99px; height: 1px; background: #555; margin: 0 5px 0 6px; position: relative; }
.z-thumb { position: absolute; left: 48px; top: -5px; width: 4px; height: 11px; background: #666; }
.z-val { margin-left: 12px; width: 28px; }

.taskbar { height: 40px; background: linear-gradient(90deg, #1f3c4b, #1d3347 50%, #1b2c40); display: flex; align-items: center; flex: none; color: #fff; }
.tb-win { margin-left: 16px; }
.tb-search { margin-left: 17px; width: 286px; height: 40px; background: #f0f0f0; border: 1px solid #d0d0d0; display: flex; align-items: center; padding-left: 10px; color: #333; font-size: 14px; gap: 12px; position: relative; overflow: hidden; }
.tb-art { position: absolute; right: 0; bottom: 0; }
.tb-apps { display: flex; height: 40px; }
.tb-item { width: 49px; height: 40px; display: flex; align-items: center; justify-content: center; position: relative; }
.tb-item::after { content: ""; position: absolute; left: 7px; right: 7px; bottom: 0; height: 2px; background: #76b9ed; }
.tb-plain::after { display: none; }
.tb-tv { margin-right: 2px; }
.tb-active { width: 47px; background-color: #405a69; padding-left: 2px; }
.tb-active::after { left: 0; right: 0; }
.sv-app { font: 700 11px "Liberation Sans", sans-serif; fill: #fff; }
.sv-app2 { font: 700 17px "Liberation Sans", sans-serif; fill: #fff; }
.sv-badge { font: 700 9px "Liberation Sans", sans-serif; fill: #fff; }
.tb-temp { margin-left: 5px; width: 38px; font-size: 13.500px; white-space: nowrap; }
.tb-wtxt { width: 98px; font-size: 13.500px; white-space: nowrap; }
.tb-up { margin-left: 24px; }
.tb-cloud { margin-left: 10px; }
.tb-meet { margin-left: 9px; }
.tb-wifi { margin-left: 12px; }
.tb-vol { margin-left: 8px; }
.tb-2l { display: flex; flex-direction: column; align-items: center; font-size: 11.500px; line-height: 18px; white-space: nowrap; }
.tb-lang { margin-left: 9px; width: 28px; }
.tb-clock { margin-left: 8px; width: 62px; font-size: 11px; letter-spacing: -.2px; }
.tb-note { margin-left: 16px; margin-right: 17px; width: 24px; height: 28px; position: relative; padding-top: 5px; }
.tb-badge { position: absolute; left: 8px; top: 13px; width: 16px; height: 16px; border-radius: 50%; background: #444; border: 1px solid #bbb; font-size: 10px; font-weight: 700; display: flex; align-items: center; justify-content: center; }
```
